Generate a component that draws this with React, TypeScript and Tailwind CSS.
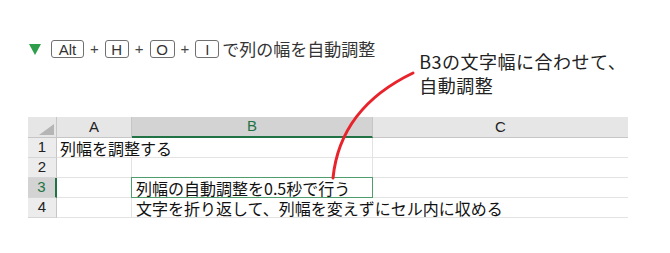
import React from 'react';

const jp = "font-['Noto_Sans_CJK_JP','Noto_Sans',sans-serif]";
const lat = "font-['Liberation_Sans','Noto_Sans_CJK_JP',sans-serif]";

function Key({ label, w }: { label: string; w: string }) {
  return (
    <span className={`${w} inline-flex h-[18px] items-center justify-center rounded-[3px] border border-[#707070] text-[15px] leading-none text-[#333] ${lat}`}>
      {label}
    </span>
  );
}

const Plus = () => <span className={`mx-[6px] text-[15px] text-[#444] ${lat}`}>+</span>;

type Cell = { text?: string; w: string; noRight?: boolean; selected?: boolean; pad?: string };

const rows: { n: string; active?: boolean; cells: Cell[] }[] = [
  { n: '1', cells: [{ text: '列幅を調整する', w: 'w-[75px]', noRight: true, pad: 'pl-[3px]' }, { w: 'w-[241px]' }, { w: 'w-[255px]', noRight: true }] },
  { n: '2', cells: [{ w: 'w-[75px]' }, { w: 'w-[241px]' }, { w: 'w-[255px]', noRight: true }] },
  { n: '3', active: true, cells: [{ w: 'w-[75px]' }, { text: '列幅の自動調整を0.5秒で行う', w: 'w-[241px]', selected: true, pad: 'pl-[4px]' }, { w: 'w-[255px]', noRight: true }] },
  { n: '4', cells: [{ w: 'w-[75px]' }, { text: '文字を折り返して、列幅を変えずにセル内に収める', w: 'w-[241px]', noRight: true, pad: 'pl-[4px]' }, { w: 'w-[255px]', noRight: true }] },
];

export default function App() {
  return (
    <div className={`relative h-[253px] w-[670px] overflow-hidden bg-white ${jp}`}>
      <div className="flex items-start">
        <div className="flex items-center pl-[29px] pt-[38px]">
          <svg width="12" height="11" viewBox="0 0 12 11" className="mr-[10px]">
            <polygon points="0,0 12,0 6,11" fill="#2f9e4a" />
          </svg>
          <Key label="Alt" w="w-[33px]" />
          <Plus />
          <Key label="H" w="w-[24px]" />
          <Plus />
          <Key label="O" w="w-[25px]" />
          <Plus />
          <Key label="I" w="w-[24px]" />
          <span className="ml-[3px] text-[17px] leading-[20px] text-[#333]">で列の幅を自動調整</span>
        </div>
        <div className="ml-[44px] pt-[49px] text-[18px] leading-[24px] tracking-[0.5px] text-[#222]">
          B3の文字幅に合わせて、
          <br />
          自動調整
        </div>
      </div>

      <div className="ml-[28px] mt-[20px] w-[600px]">
        <div className="flex h-[21px]">
          <div className="relative w-[29px] border-b border-r border-[#c6c6c6] bg-[#e6e6e6]">
            <svg width="15" height="11" className="absolute bottom-[2px] right-[2px]">
              <polygon points="15,0 15,11 0,11" fill="#b5b5b5" />
            </svg>
          </div>
          <div className={`flex w-[75px] items-center justify-center border-b border-r border-[#c6c6c6] bg-[#e6e6e6] text-[15px] text-[#222] ${lat}`}>A</div>
          <div className={`flex w-[241px] items-center justify-center border-b-2 border-r border-b-[#217346] border-r-[#c6c6c6] bg-[#d3d3d3] text-[15px] text-[#217346] ${lat}`}>B</div>
          <div className={`flex w-[255px] items-center justify-center border-b border-[#c6c6c6] bg-[#e6e6e6] text-[15px] text-[#222] ${lat}`}>C</div>
        </div>
        {rows.map((r) => (
          <div key={r.n} className="flex h-[20px]">
            <div
              className={`flex w-[29px] items-center justify-center border-b border-[#d6d6d6] text-[15px] ${lat} ${
                r.active ? 'border-r-2 border-r-[#217346] bg-[#d3d3d3] text-[#217346]' : 'border-r border-r-[#c6c6c6] bg-[#ececec] text-[#222]'
              }`}
            >
              {r.n}
            </div>
            {r.cells.map((c, i) => (
              <div
                key={i}
                className={`relative flex shrink-0 items-center whitespace-nowrap border-b border-[#e3e3e3] text-[16px] leading-[20px] text-[#111] ${c.w} ${c.pad ?? ''} ${
                  c.noRight ? '' : 'border-r'
                }`}
              >
                {c.selected ? <span className="pointer-events-none absolute inset-[-1px] border-[1.5px] border-[#4f9c6c]" /> : null}
                {c.text ? <span className="relative z-10">{c.text}</span> : null}
              </div>
            ))}
          </div>
        ))}
      </div>

      <svg className="pointer-events-none absolute left-0 top-0" width="670" height="253">
        <path d="M413 73 Q 340 108 333 178" fill="none" stroke="#e8232b" strokeWidth="3" strokeLinecap="round" />
      </svg>
    </div>
  );
}
